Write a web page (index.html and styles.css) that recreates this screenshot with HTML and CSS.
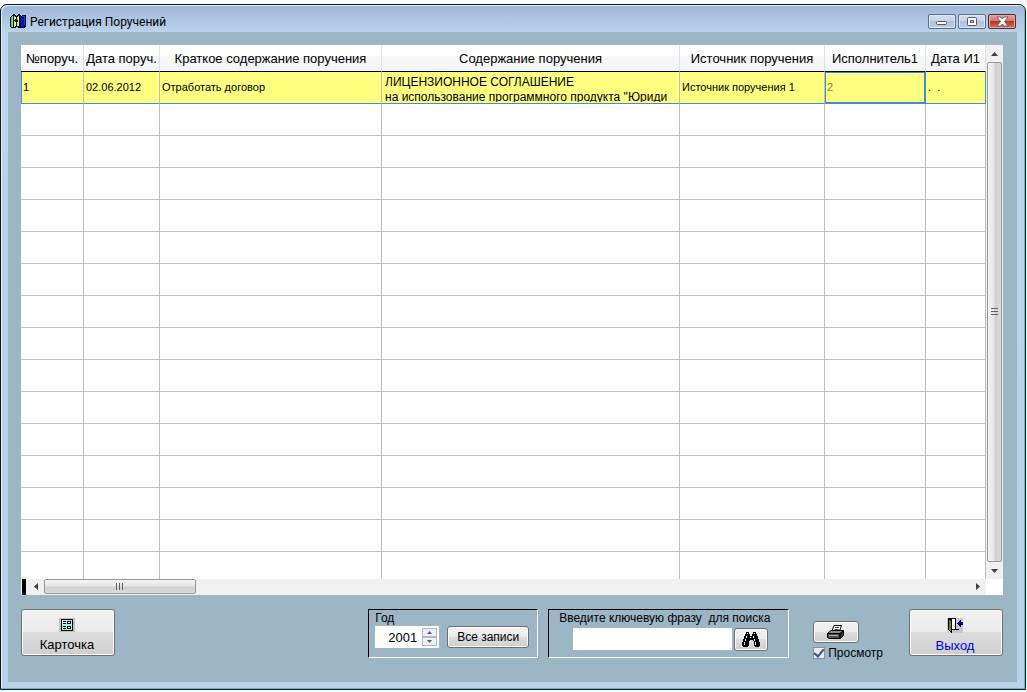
FILE: index.html
```
<!doctype html>
<html lang="ru">

<head>
    <meta charset="utf-8">
    <title>Регистрация Поручений</title>
    <meta name="viewport" content="width=device-width, initial-scale=1">
    <link rel="stylesheet" href="styles.css">
</head>

<body>

    <div class="window">
        <header class="titlebar">
            <svg class="app-icon" width="17" height="16" viewBox="0 0 17 16" shape-rendering="crispEdges">
                <path d="M0 4h1V3h1V2h1V1h2v1h1v1h1V2h1V1h2v1h1v12h-1v1H8v-1H6v1H1v-1H0z" fill="#101010" />
                <path d="M1 4h1v10H1z" fill="#30c8a0" />
                <path d="M2 3h1v11H2z" fill="#80e8a0" />
                <path d="M4 3h1v4H4zM4 8h1v6H4z" fill="#f0e860" />
                <path d="M5 4h1v2H5zM5 9h1v4H5z" fill="#f8f8c0" />
                <path d="M7 4h1v3H7zM7 9h1v4H7z" fill="#f0e860" />
                <path d="M8 3h1v10H8z" fill="#e8e8d8" />
                <path d="M10 4l2-2h4v11l-2 2h-4z" fill="#000040" />
                <path d="M11 5h3v9h-3z" fill="#0818c0" />
                <path d="M12 3h3v1h-3zM14 4h1v8h-1z" fill="#2038d8" />
            </svg>
            <h1 class="title">Регистрация Поручений</h1>
            <div class="win-buttons">
                <button type="button" class="win-btn" aria-label="Свернуть">
                    <svg width="26" height="13" viewBox="0 0 26 13"><rect x="7.500" y="6.500" width="10" height="3" rx="1" fill="#fff" stroke="#535666" /></svg>
                </button>
                <button type="button" class="win-btn" aria-label="Развернуть">
                    <svg width="26" height="13" viewBox="0 0 26 13"><rect x="8.500" y="2.500" width="9" height="8" rx="1" fill="#fff" stroke="#535666" /><rect x="11.500" y="5.500" width="3" height="2" fill="#b9cce4" stroke="#535666" /></svg>
                </button>
                <button type="button" class="win-btn win-close" aria-label="Закрыть">
                    <svg width="26" height="13" viewBox="0 0 26 13"><path d="M8 2h4l1.500 2L15 2h4l-3.500 4.500L19 11h-4l-1.500-2-1.500 2H8l3.500-4.500z" fill="#fff" stroke="#6a4a55" stroke-width=".8" /></svg>
                </button>
            </div>
        </header>

        <main class="client">
            <div class="grid">
                <table class="orders">
                    <colgroup>
                        <col class="c-num">
                        <col class="c-date">
                        <col class="c-short">
                        <col class="c-text">
                        <col class="c-source">
                        <col class="c-exec">
                        <col class="c-date-exec">
                    </colgroup>
                    <thead>
                        <tr>
                            <th>№поруч.</th>
                            <th>Дата поруч.</th>
                            <th>Краткое содержание поручения</th>
                            <th>Содержание поручения</th>
                            <th>Источник поручения</th>
                            <th>Исполнитель1</th>
                            <th>Дата И1</th>
                        </tr>
                    </thead>
                    <tbody>
                        <tr class="current">
                            <td>1</td>
                            <td>02.06.2012</td>
                            <td>Отработать договор</td>
                            <td class="memo"><div class="memo-text">ЛИЦЕНЗИОННОЕ СОГЛАШЕНИЕ<br>на использование программного продукта "Юриди</div></td>
                            <td>Источник поручения 1</td>
                            <td class="focused">2</td>
                            <td>.&nbsp;&nbsp;.</td>
                        </tr>
                        <tr><td></td><td></td><td></td><td></td><td></td><td></td><td></td></tr>
                        <tr><td></td><td></td><td></td><td></td><td></td><td></td><td></td></tr>
                        <tr><td></td><td></td><td></td><td></td><td></td><td></td><td></td></tr>
                        <tr><td></td><td></td><td></td><td></td><td></td><td></td><td></td></tr>
                        <tr><td></td><td></td><td></td><td></td><td></td><td></td><td></td></tr>
                        <tr><td></td><td></td><td></td><td></td><td></td><td></td><td></td></tr>
                        <tr><td></td><td></td><td></td><td></td><td></td><td></td><td></td></tr>
                        <tr><td></td><td></td><td></td><td></td><td></td><td></td><td></td></tr>
                        <tr><td></td><td></td><td></td><td></td><td></td><td></td><td></td></tr>
                        <tr><td></td><td></td><td></td><td></td><td></td><td></td><td></td></tr>
                        <tr><td></td><td></td><td></td><td></td><td></td><td></td><td></td></tr>
                        <tr><td></td><td></td><td></td><td></td><td></td><td></td><td></td></tr>
                        <tr><td></td><td></td><td></td><td></td><td></td><td></td><td></td></tr>
                        <tr><td></td><td></td><td></td><td></td><td></td><td></td><td></td></tr>
                        <tr class="partial"><td></td><td></td><td></td><td></td><td></td><td></td><td></td></tr>
                    </tbody>
                </table>

                <div class="vscroll">
                    <button type="button" class="arrow" aria-label="Вверх"><svg width="7" height="4" viewBox="0 0 7 4"><path d="M0 4L3.500 0 7 4z" /></svg></button>
                    <div class="thumb"><svg width="7" height="8" viewBox="0 0 7 8" shape-rendering="crispEdges"><path d="M0 0h7v1H0zM0 3h7v1H0zM0 6h7v1H0z" /></svg></div>
                    <button type="button" class="arrow" aria-label="Вниз"><svg width="7" height="4" viewBox="0 0 7 4"><path d="M0 0h7L3.500 4z" /></svg></button>
                </div>

                <div class="hscroll">
                    <div class="splitter"></div>
                    <button type="button" class="arrow" aria-label="Влево"><svg width="4" height="7" viewBox="0 0 4 7"><path d="M4 0v7L0 3.500z" /></svg></button>
                    <div class="thumb"><svg width="8" height="7" viewBox="0 0 8 7" shape-rendering="crispEdges"><path d="M0 0h1v7H0zM3 0h1v7H3zM6 0h1v7H6z" /></svg></div>
                    <button type="button" class="arrow arrow-right" aria-label="Вправо"><svg width="4" height="7" viewBox="0 0 4 7"><path d="M0 0v7l4-3.500z" /></svg></button>
                </div>
            </div>

            <div class="toolbar">
                <button type="button" class="btn btn-big btn-card">
                    <svg width="16" height="14" viewBox="0 0 16 14" shape-rendering="crispEdges">
                        <path d="M0 0h16v14H0z" fill="#c0c0c0" />
                        <path d="M2 1h12v12H2z" />
                        <path d="M3 2h10v10H3z" fill="#a8f0f0" />
                        <path d="M4 3h3v1H4zM4 5h3v1H4zM4 8h3v1H4zM4 10h3v1H4zM8 3h4v3H8zM8 8h4v3H8z" />
                        <path d="M9 4h2v1H9zM9 9h2v1H9z" fill="#fff" />
                    </svg>
                    <span>Карточка</span>
                </button>

                <div class="group group-year">
                    <label for="year">Год</label>
                    <div class="line">
                        <div class="spin">
                            <input id="year" type="text" inputmode="numeric" value="2001">
                            <div class="spin-buttons">
                                <button type="button" aria-label="Больше"><svg width="5" height="3" viewBox="0 0 5 3"><path d="M0 3L2.500 0 5 3z" /></svg></button>
                                <button type="button" aria-label="Меньше"><svg width="5" height="3" viewBox="0 0 5 3"><path d="M0 0h5L2.500 3z" /></svg></button>
                            </div>
                        </div>
                        <button type="button" class="btn btn-all">Все записи</button>
                    </div>
                </div>

                <div class="group group-search">
                    <label for="phrase">Введите ключевую фразу&nbsp; для поиска</label>
                    <div class="line">
                        <input id="phrase" class="phrase" type="text">
                        <button type="button" class="btn btn-find" aria-label="Найти">
                            <svg width="18" height="15" viewBox="0 0 18 15" shape-rendering="crispEdges">
                                <path d="M4 0h3v2h1v2h2V2h1V0h3v2h1v2h1v3h1v3h1v4h-1v1h-4v-1h-1V9h-1V8H8v1H7v5H6v1H1v-1H0v-4h1V7h1V4h1V2h1z" />
                                <path d="M5 1h1v1H5zM12 1h1v1h-1zM4 4h1v2H4zM3 7h1v2H3zM2 10h1v3H2zM11 4h1v2h-1zM12 7h1v2h-1zM13 10h1v3h-1zM8 5h1v1H8z" fill="#fff" />
                            </svg>
                        </button>
                    </div>
                </div>

                <div class="print">
                    <button type="button" class="btn btn-print" aria-label="Печать">
                        <svg width="18" height="15" viewBox="0 0 18 15">
                            <path d="M5 6L7 .5h7.500L12.500 6z" fill="#fff" stroke="#000" />
                            <path d="M8 2.500h4M7.500 4.500h4" stroke="#000" stroke-width=".8" />
                            <path d="M.5 8.500L4 5.500h12.500L13 8.500z" fill="#909090" stroke="#000" />
                            <path d="M.5 8.500H13v5H2l-1.500-1z" fill="#505050" stroke="#000" />
                            <path d="M13 8.500l3.500-3v5L13 13.500z" fill="#303030" stroke="#000" />
                            <path d="M2 10.500h9" stroke="#a8a8a8" />
                        </svg>
                    </button>
                    <label class="preview"><input type="checkbox" checked>Просмотр</label>
                </div>

                <button type="button" class="btn btn-big btn-exit">
                    <svg width="16" height="15" viewBox="0 0 16 15" shape-rendering="crispEdges">
                        <path d="M0 0h16v15H0z" fill="#c8c8c8" />
                        <path d="M1 0h8v11h3v1H1z" />
                        <path d="M5 1h3v10H5z" fill="#fff" />
                        <path d="M1 0h1v1h1v1h1v1h1v12H4v-1H3v-1H2v-1H1z" />
                        <path d="M2 2h1v1h1v10H3v-1H2z" fill="#808000" />
                        <path d="M10 5h1V4h1V3h1V2h1v2h2v3h-2v2h-1V8h-1V7h-1V6h-1z" fill="#000080" />
                    </svg>
                    <span>Выход</span>
                </button>
            </div>
        </main>
    </div>

</body>

</html>
```
FILE: styles.css
```
* {
    box-sizing: border-box;
}

body {
    margin: 0;
    padding: 4px 1px 2px 0;
    background: #fff;
    color: #000;
    font-family: "Liberation Sans", Arial, sans-serif;
    font-size: 13px;
}

button,
input {
    margin: 0;
    padding: 0;
    font: inherit;
    color: inherit;
}

svg {
    display: block;
}

/* window frame */
.window {
    display: flex;
    flex-direction: column;
    min-height: calc(100vh - 6px);
    padding: 0 8px 7px 7px;
    border: 1px solid #101820;
    border-radius: 7px 7px 0 0;
    background: linear-gradient(#9db8d8, #bdd3ec 28px, #bad1ea);
    box-shadow: inset -1px -1px 0 #48c4e0, inset 1px 1px 0 #e4eefa;
}

.titlebar {
    display: flex;
    align-items: center;
    height: 27px;
    padding: 0 1px 0 2px;
}

.app-icon {
    margin-top: 4px;
}

.title {
    flex: 1;
    margin: 6px 0 0 3px;
    font: 12px/18px Roboto, "Segoe UI", sans-serif;
}

.win-buttons {
    display: flex;
    gap: 2px;
    margin-top: 6px;
}

.win-btn {
    width: 28px;
    height: 15px;
    border: 1px solid #5d6f88;
    border-radius: 2px;
    background: linear-gradient(#d3dfee, #c4d4e7 48%, #adc1da 50%, #bdd0e6);
    box-shadow: inset 0 0 0 1px #dde7f3;
}

.win-close {
    border-color: #5b2a30;
    background: linear-gradient(#e0a69a, #cf7668 48%, #b83a26 50%, #d0705c);
    box-shadow: inset 0 0 0 1px #e3aaa0;
}

.client {
    flex: 1;
    padding: 13px 14px 21px 13px;
    background: #9db6c5;
}

/* grid */
.grid {
    display: grid;
    grid-template-columns: 1fr 17px;
    background: #fff;
}

.orders {
    width: 100%;
    table-layout: fixed;
    border-collapse: separate;
    border-spacing: 0;
}

.c-num { width: 63px; }
.c-date { width: 76px; }
.c-short { width: 222px; }
.c-source { width: 145px; }
.c-exec { width: 101px; }
.c-date-exec { width: 60px; }

.orders th {
    height: 27px;
    padding: 0;
    border-right: 1px solid #dfe1e5;
    border-bottom: 1px solid #000;
    background: linear-gradient(#fff 40%, #f6f7f9 42%, #f3f4f6);
    font-weight: normal;
    white-space: nowrap;
}

.orders td {
    height: 32px;
    padding: 0 0 1px 2px;
    border-right: 1px solid #c0c0c0;
    border-bottom: 1px solid #c0c0c0;
    font-size: 11px;
    white-space: nowrap;
    overflow: hidden;
}

.orders .current td {
    background: #ffff80;
    border-bottom-color: #3a90d0;
}

.orders .current td:first-child {
    box-shadow: inset 1px 0 0 #3a90d0;
}

.orders .current td:last-child {
    border-right-color: #3a90d0;
}

.orders .current .memo {
    padding: 3px 0 0 3px;
    vertical-align: top;
    font-size: 12px;
}

.memo-text {
    height: 27px;
    line-height: 15px;
    overflow: hidden;
}

.orders .current .focused {
    border-right-color: #3c8cdc;
    box-shadow: inset 0 0 0 1px #3c8cdc;
    color: #808040;
}

.orders .partial td {
    height: 27px;
    border-bottom: 0;
}

/* scrollbars */
.vscroll {
    display: flex;
    flex-direction: column;
    background: #f0f0f0;
}

.hscroll {
    display: flex;
    height: 16px;
    padding-left: 1px;
    background: #f0f0f0;
}

.arrow {
    display: flex;
    align-items: center;
    justify-content: center;
    width: 17px;
    height: 17px;
    border: 0;
    background: none;
    fill: #404040;
}

.hscroll .arrow {
    height: 15px;
}

.thumb {
    display: flex;
    align-items: center;
    justify-content: center;
    border: 1px solid #979797;
    border-radius: 2px;
    fill: #606060;
}

.vscroll .thumb {
    flex: 1;
    margin: 0 1px;
    background: linear-gradient(90deg, #f4f4f4, #e6e6e8 45%, #cfcfd2 55%, #dcdcde);
}

.hscroll .thumb {
    width: 152px;
    height: 15px;
    background: linear-gradient(#f4f4f4, #e6e6e8 45%, #cfcfd2 55%, #dcdcde);
}

.splitter {
    width: 4px;
    margin-right: 1px;
    background: #000;
}

.arrow-right {
    margin-left: auto;
}

/* bottom panel */
.toolbar {
    display: flex;
    align-items: flex-start;
    margin-top: 14px;
}

.btn {
    border: 1px solid #707070;
    border-radius: 3px;
    background: linear-gradient(#f2f2f2, #ebebeb 49%, #dddddd 50%, #cfcfcf);
    box-shadow: inset 0 0 0 1px #fafafa;
}

.btn svg {
    margin: 0 auto;
}

.btn-big {
    width: 94px;
    height: 47px;
    padding: 7px 2px 0 0;
    line-height: 18px;
}

.btn-big svg {
    margin-bottom: 4px;
}

.btn-card {
    margin-right: auto;
}

.group {
    height: 49px;
    border: 1px solid;
    border-color: #000 #fff #fff #000;
    font-size: 12px;
}

.group label {
    display: block;
    line-height: 16px;
}

.line {
    display: flex;
}

.group-year {
    width: 170px;
    margin-right: 10px;
    padding: 0 6px;
}

.group-year .line {
    gap: 8px;
}

.spin {
    display: flex;
    width: 64px;
    height: 22px;
    padding: 2px;
    background: #fff;
}

.spin input {
    flex: 1;
    min-width: 0;
    padding-right: 5px;
    border: 0;
    background: none;
    text-align: right;
    font-size: 13px;
}

.spin-buttons {
    display: flex;
    flex-direction: column;
    width: 15px;
}

.spin-buttons button {
    display: flex;
    flex: 1;
    align-items: center;
    justify-content: center;
    border: 1px solid #b4b8c0;
    background: #eef0f4;
    fill: #4a5c90;
}

.btn-all {
    width: 82px;
    height: 22px;
}

.group-search {
    width: 241px;
    margin-right: 24px;
    padding: 0 10px;
}

.group-search .line {
    gap: 2px;
    padding: 2px 10px 0 14px;
}

.phrase {
    flex: 1;
    min-width: 0;
    height: 22px;
    border: 0;
    background: #fff;
}

.btn-find {
    width: 34px;
    height: 23px;
}

.print {
    margin: 12px 26px 0 0;
}

.btn-print {
    display: block;
    width: 46px;
    height: 22px;
}

.preview {
    display: flex;
    align-items: center;
    gap: 3px;
    margin-top: 2px;
    font-size: 12px;
    line-height: 16px;
}

.preview input {
    appearance: none;
    width: 12px;
    height: 12px;
    border: 1px solid #8e8f8f;
    background: #e8ecf2;
    display: grid;
    place-items: center;
}

.preview input:checked::before {
    content: "";
    width: 4px;
    height: 8px;
    border: solid #3c4c94;
    border-width: 0 2px 2px 0;
    transform: translateY(-1px) rotate(40deg);
}

.btn-exit {
    color: #0000e0;
}
```
